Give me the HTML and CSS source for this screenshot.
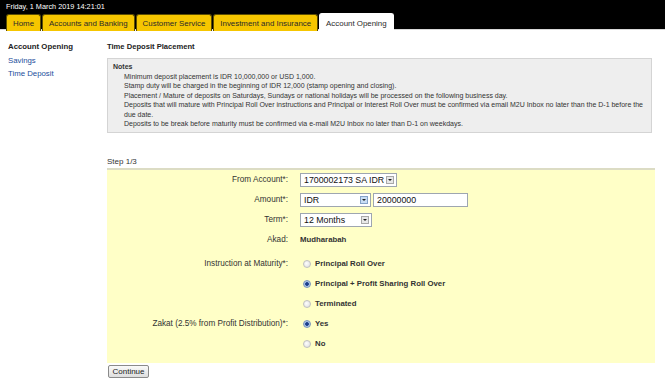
FILE: index.html
```html
<!DOCTYPE html>
<html lang="en">
  <head>
    <meta charset="UTF-8" />
    <title>Time Deposit Placement</title>
    <link rel="stylesheet" href="styles.css">
  </head>
  <body>
    <div class="header">
      <div class="date">Friday, 1 March 2019 14:21:01</div>
      <div class="tabs">
        <a class="tab">Home</a>
        <a class="tab">Accounts and Banking</a>
        <a class="tab">Customer Service</a>
        <a class="tab">Investment and Insurance</a>
        <a class="tab active">Account Opening</a>
      </div>
    </div>

    <div class="page">
      <div class="sidenav">
        <div class="nav-title">Account Opening</div>
        <a class="nav-link">Savings</a>
        <a class="nav-link">Time Deposit</a>
      </div>

      <div class="content">
        <h1>Time Deposit Placement</h1>
        <div class="notes">
          <div class="notes-title">Notes</div>
          <ul>
            <li>Minimum deposit placement is IDR 10,000,000 or USD 1,000.</li>
            <li>Stamp duty will be charged in the beginning of IDR 12,000 (stamp opening and closing).</li>
            <li>Placement / Mature of deposits on Saturdays, Sundays or national holidays will be processed on the following business day.</li>
            <li>Deposits that will mature with Principal Roll Over instructions and Principal or Interest Roll Over must be confirmed via email M2U Inbox no later than the D-1 before the due date.</li>
            <li>Deposits to be break before maturity must be confirmed via e-mail M2U Inbox no later than D-1 on weekdays.</li>
          </ul>
        </div>

        <div class="step">Step 1/3</div>
        <div class="form">
          <div class="group">
            <div class="row">
              <label>From Account*:</label>
              <div class="field">
                <span class="select w-account">1700002173 SA IDR<i class="arrow"></i></span>
              </div>
            </div>
            <div class="row">
              <label>Amount*:</label>
              <div class="field">
                <span class="select w-currency">IDR<i class="arrow blue"></i></span>
                <span class="input">20000000</span>
              </div>
            </div>
            <div class="row">
              <label>Term*:</label>
              <div class="field">
                <span class="select w-term">12 Months<i class="arrow"></i></span>
              </div>
            </div>
            <div class="row">
              <label>Akad:</label>
              <div class="field"><b>Mudharabah</b></div>
            </div>
          </div>
          <div class="group">
            <div class="row">
              <label>Instruction at Maturity*:</label>
              <div class="field"><span class="radio"></span><b>Principal Roll Over</b></div>
            </div>
            <div class="row">
              <label></label>
              <div class="field"><span class="radio on"></span><b>Principal + Profit Sharing Roll Over</b></div>
            </div>
            <div class="row">
              <label></label>
              <div class="field"><span class="radio"></span><b>Terminated</b></div>
            </div>
            <div class="row">
              <label>Zakat (2.5% from Profit Distribution)*:</label>
              <div class="field"><span class="radio on"></span><b>Yes</b></div>
            </div>
            <div class="row">
              <label></label>
              <div class="field"><span class="radio"></span><b>No</b></div>
            </div>
          </div>
        </div>
        <button type="button" class="btn">Continue</button>
      </div>
    </div>
  </body>
</html>
```

FILE: styles.css
```css
body {
  margin: 0;
  font-family: "Liberation Sans", Arial, sans-serif;
  font-size: 8.2px;
  color: #333;
  background: #fff;
}
.header {
  background: #000;
  height: 29px;
  border-bottom: 1px solid #d8d8d8;
}
.date {
  color: #fff;
  font-size: 7.3px;
  padding: 2px 0 0 6px;
  height: 10px;
  line-height: 9px;
}
.tabs {
  display: flex;
  padding-left: 6px;
  margin-top: 2px;
  gap: 1px;
}
.tab {
  display: block;
  height: 16px;
  line-height: 17px;
  padding: 0 6px;
  background: #f6c600;
  border: 1px solid #5e4f00;
  border-bottom: none;
  border-radius: 3px 3px 0 0;
  color: #2a2a2a;
  font-size: 7.9px;
}
.tab.active {
  background: #fff;
  border-color: #fff;
  height: 17px;
  margin-top: -1px;
  line-height: 19px;
  padding: 0 6px;
}
.page {
  display: flex;
}
.sidenav {
  width: 99px;
  padding: 12px 0 0 8px;
  font-size: 7.8px;
}
.nav-title {
  font-weight: bold;
  color: #222;
  height: 14px;
  line-height: 10px;
}
.nav-link {
  display: block;
  color: #1d4e9b;
  height: 13px;
  line-height: 10px;
}
.content {
  width: 548px;
  padding-top: 12px;
}
h1 {
  margin: 0;
  font-size: 7.6px;
  line-height: 10px;
  font-weight: bold;
  color: #222;
  height: 16px;
}
.notes {
  background: #eeeeee;
  border: 1px solid #d4d4d4;
  padding: 3px 6px 3px 5px;
  font-size: 7px;
  line-height: 9.5px;
  color: #333;
  width: 532px;
}
.notes-title {
  font-weight: bold;
}
.notes ul {
  list-style: none;
  margin: 0;
  padding-left: 11px;
}
.step {
  margin-top: 24px;
  font-size: 8px;
  height: 11px;
  line-height: 10px;
  color: #333;
}
.form {
  background: #ffffc7;
  border-top: 2px solid #dcdcc4;
  padding: 0 0 9px;
  width: 548px;
}
.group + .group {
  margin-top: 4px;
}
.row {
  display: flex;
  align-items: center;
  height: 20px;
}
.row label {
  width: 181px;
  text-align: right;
  padding-right: 12px;
}
.field {
  display: flex;
  align-items: center;
  gap: 2px;
  color: #333;
  font-size: 7.8px;
}
.select,
.input {
  position: relative;
  display: block;
  box-sizing: border-box;
  height: 14px;
  line-height: 12px;
  border: 1px solid #9ea6b0;
  background: #fff;
  font-size: 8.8px;
  color: #111;
  padding-left: 3px;
  white-space: nowrap;
}
.w-account { width: 97px; }
.w-currency { width: 71px; }
.w-term { width: 72px; }
.input { width: 95px; }
.arrow {
  position: absolute;
  right: 2px;
  top: 2px;
  width: 8px;
  height: 8px;
  box-sizing: border-box;
  border: 1px solid #a8a8a8;
  background: #e8e8e8;
}
.arrow::after {
  content: "";
  position: absolute;
  left: 1px;
  top: 2px;
  border-left: 2px solid transparent;
  border-right: 2px solid transparent;
  border-top: 2px solid #222;
}
.arrow.blue {
  background: #c9ddf5;
  border-color: #86a2c8;
}
.radio {
  display: inline-block;
  box-sizing: border-box;
  width: 8px;
  height: 8px;
  margin-left: 3px;
  margin-right: 2px;
  border-radius: 50%;
  border: 1px solid #c0c0c0;
  background: radial-gradient(circle at 40% 40%, #fdfdfd, #dcdcdc);
}
.radio.on {
  background: radial-gradient(circle, #1b3e8e 0 1.5px, #a9c4e6 2.2px);
  border-color: #7a94bb;
}
.btn {
  display: block;
  font-family: "Liberation Sans", Arial, sans-serif;
  font-size: 8px;
  color: #222;
  background: linear-gradient(#fafafa, #dedede);
  border: 1px solid #8a8a8a;
  border-radius: 2px;
  height: 13px;
  width: 41px;
  padding: 0;
  margin: 2px 0 0 1px;
}
```
